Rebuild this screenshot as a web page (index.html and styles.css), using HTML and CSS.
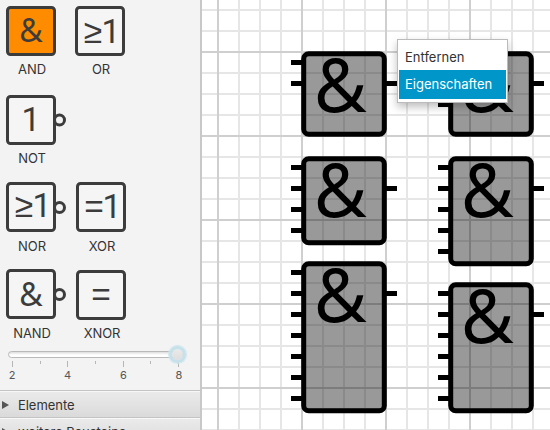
FILE: index.html
```html
<!DOCTYPE html>
<html lang="de">
<head>
<meta charset="utf-8">
<title>Bausteine</title>
<link rel="stylesheet" href="styles.css">
</head>
<body>
<div class="app">
  <aside class="sidebar">
    <section class="palette">
      <div class="row row-first">
        <div class="item"><svg class="tile selected" viewBox="0 0 60 50"><rect x="1.5" y="1.5" width="47" height="47" rx="3"/><text class="amp" x="25" y="36">&amp;</text></svg><span>AND</span></div>
        <div class="item item-or"><svg class="tile" viewBox="0 0 60 50"><rect x="1.5" y="1.5" width="47" height="47" rx="3"/><text y="36.5"><tspan class="op" x="18">≥</tspan><tspan x="36">1</tspan></text></svg><span>OR</span></div>
      </div>
      <div class="row row-not">
        <div class="item"><svg class="tile" viewBox="0 0 60 50"><circle cx="53.5" cy="25" r="5"/><rect x="1.5" y="1.5" width="47" height="47" rx="3"/><text x="25" y="36">1</text></svg><span>NOT</span></div>
      </div>
      <div class="row row-nor">
        <div class="item"><svg class="tile" viewBox="0 0 60 50"><circle cx="53.5" cy="25.5" r="5"/><rect x="1.5" y="1.5" width="47" height="47" rx="3"/><text y="35"><tspan class="op" x="18">≥</tspan><tspan x="36">1</tspan></text></svg><span>NOR</span></div>
        <div class="item"><svg class="tile" viewBox="0 0 60 50"><rect x="1.5" y="1.5" width="47" height="47" rx="3"/><text y="36"><tspan class="op" x="18">=</tspan><tspan x="36">1</tspan></text></svg><span>XOR</span></div>
      </div>
      <div class="row row-nand">
        <div class="item"><svg class="tile" viewBox="0 0 60 50"><circle cx="53.5" cy="25.5" r="5"/><rect x="1.5" y="1.5" width="47" height="47" rx="3"/><text class="amp" x="25" y="36.5">&amp;</text></svg><span>NAND</span></div>
        <div class="item"><svg class="tile shifted" viewBox="0 0 60 50"><rect x="1.5" y="1.5" width="47" height="47" rx="3"/><text class="op" x="25" y="36">=</text></svg><span>XNOR</span></div>
      </div>
      <div class="slider">
        <div class="track"><div class="thumb"></div></div>
        <div class="ticks"><i></i><i class="minor"></i><i></i><i class="minor"></i><i></i><i class="minor"></i><i></i></div>
        <div class="numbers"><span>2</span><span>4</span><span>6</span><span>8</span></div>
      </div>
    </section>
    <div class="section-head"><b class="arrow"></b><span>Elemente</span></div>
    <div class="section-head"><b class="arrow"></b><span>weitere Bausteine</span></div>
  </aside>
  <main class="board">
    <svg class="circuit" viewBox="202 0 348 430">
      <defs>
        <pattern id="minor" x="217" y="51" width="21" height="21" patternUnits="userSpaceOnUse"><path class="minor-line" d="M0 1H21M1 0V21"/></pattern>
        <pattern id="major" x="217" y="51" width="84" height="84" patternUnits="userSpaceOnUse"><path class="major-line" d="M0 1H84M1 0V84"/></pattern>
      </defs>
      <rect x="202" width="348" height="430" fill="url(#minor)"/>
      <rect x="202" width="348" height="430" fill="url(#major)"/>
      <g class="gate"><path d="M291 62.5h12M291 83.5h12M385 83.5h12"/><rect x="303.7" y="53.7" width="80.6" height="80.6" rx="5"/><text transform="translate(314 112) scale(.96 1)">&amp;</text></g>
      <g class="gate"><path d="M291 167.5h12M291 188.5h12M291 209.5h12M291 230.5h12M385 188.5h12"/><rect x="303.7" y="158.7" width="80.6" height="84" rx="5"/><text transform="translate(314 217) scale(.96 1)">&amp;</text></g>
      <g class="gate"><path d="M291 272.5h12M291 293.5h12M291 314.5h12M291 335.5h12M291 356.5h12M291 377.5h12M291 398.5h12M385 293.5h12"/><rect x="303.7" y="263.7" width="80.6" height="147" rx="5"/><text transform="translate(314 322) scale(.96 1)">&amp;</text></g>
      <g class="gate"><path d="M438 62.5h12M438 83.5h12M438 104.5h12M532 83.5h12"/><rect x="450.7" y="53.7" width="80.6" height="80.6" rx="5"/><text transform="translate(461 112) scale(.96 1)">&amp;</text></g>
      <g class="gate"><path d="M438 167.5h12M438 188.5h12M438 209.5h12M438 230.5h12M438 251.5h12M532 188.5h12"/><rect x="450.7" y="158.7" width="80.6" height="105" rx="5"/><text transform="translate(461 217) scale(.96 1)">&amp;</text></g>
      <g class="gate"><path d="M438 293.5h12M438 314.5h12M438 335.5h12M438 356.5h12M438 377.5h12M438 398.5h12M532 314.5h12"/><rect x="450.7" y="284.7" width="80.6" height="126" rx="5"/><text transform="translate(461 343) scale(.96 1)">&amp;</text></g>
    </svg>
    <div class="menu"><div class="entry">Entfernen</div><div class="entry active">Eigenschaften</div></div>
  </main>
</div>
</body>
</html>
```

FILE: styles.css
```css
* { box-sizing: border-box; }
body { margin: 0; font: 13px/16px Inter, "Liberation Sans", sans-serif; color: #333; }
.app { display: flex; width: 550px; height: 430px; overflow: hidden; background: #fff; }
.sidebar { width: 202px; height: 430px; overflow: hidden; background: #f3f3f3; border-right: 2px solid #c8c8c8; flex: none; }
.palette { height: 390px; padding: 6px 0 0 6px; }
.row { display: flex; gap: 18px; height: 87px; }
.row-first { height: 89px; }
.item { width: 52px; display: flex; flex-direction: column; align-items: center; }
.item-or { margin-left: -1px; }
.item span { margin-top: 5px; white-space: nowrap; letter-spacing: -0.1px; }
.row-first span { margin-top: 5px; }
.row-nor span { margin-top: 6px; }
.row-nand { height: 78px; }
.row-nand span { margin-top: 6px; }
.tile { display: block; width: 60px; height: 50px; flex: none; align-self: flex-start; overflow: visible; }
.tile.shifted { margin-top: 1px; margin-bottom: -1px; }
.tile rect { fill: #f5f5f5; stroke: #3c3c3c; stroke-width: 3; }
.tile.selected rect { fill: #ff8c00; }
.tile circle { fill: none; stroke: #3c3c3c; stroke-width: 3; }
.tile text { font: 33.5px Roboto, "Liberation Sans", sans-serif; fill: #3c3c3c; text-anchor: middle; }
.tile .op { font: 33.5px "Liberation Sans", sans-serif; }
.tile .amp { font: 32px "Noto Sans", sans-serif; }
.slider { margin-left: 2px; width: 176px; padding-top: 4px; }
.track { width: 175px; height: 7px; border: 1px solid #b9b9b9; border-radius: 4px; background: linear-gradient(#ddd, #fff 60%); position: relative; }
.thumb { position: absolute; right: -4px; top: -6px; width: 17px; height: 17px; border-radius: 50%; border: 3px solid #c6e1ea; background: linear-gradient(#eaeaea, #dedede); background-clip: padding-box; box-shadow: 0 0 1px 1px #cee7ef; }
.ticks { display: flex; justify-content: space-between; margin: 3px 5px 0 4px; height: 7px; }
.ticks i { width: 1px; height: 6px; background: #b5b5b5; }
.ticks .minor { height: 3px; }
.numbers { display: flex; justify-content: space-between; margin: 0; padding-right: 1px; font-size: 11px; line-height: 14px; color: #555; }
.numbers span { width: 8px; text-align: center; }
.section-head { height: 27px; border-top: 1px solid #c4c4c4; background: linear-gradient(#ebebeb, #dadada); box-shadow: inset 0 1px #f7f7f7; display: flex; align-items: center; padding: 1px 0 0 2px; }
.section-head span { margin-left: 9px; letter-spacing: -0.05px; }
.arrow { border-left: 7px solid #555; border-top: 4.5px solid transparent; border-bottom: 4.5px solid transparent; }
.board { position: relative; width: 348px; height: 430px; }
.circuit { display: block; width: 348px; height: 430px; }
.minor-line { stroke: #e6e6e6; stroke-width: 2; }
.major-line { stroke: #cfcfcf; stroke-width: 2; }
.gate path { stroke: #000; stroke-width: 5; }
.gate rect { fill: #000; fill-opacity: .4; stroke: #000; stroke-width: 5; }
.gate text { font: 75px "Noto Sans", sans-serif; }
.menu { position: absolute; left: 195px; top: 39px; width: 111px; height: 64px; padding: 2px 1px; background: #fff; border: 1px solid #bbb; box-shadow: 0 4px 8px rgba(0,0,0,.25); }
.entry { height: 28px; line-height: 31px; padding-left: 6px; }
.entry.active { height: 29px; line-height: 29px; background: #0096c9; color: #fff; }
```
